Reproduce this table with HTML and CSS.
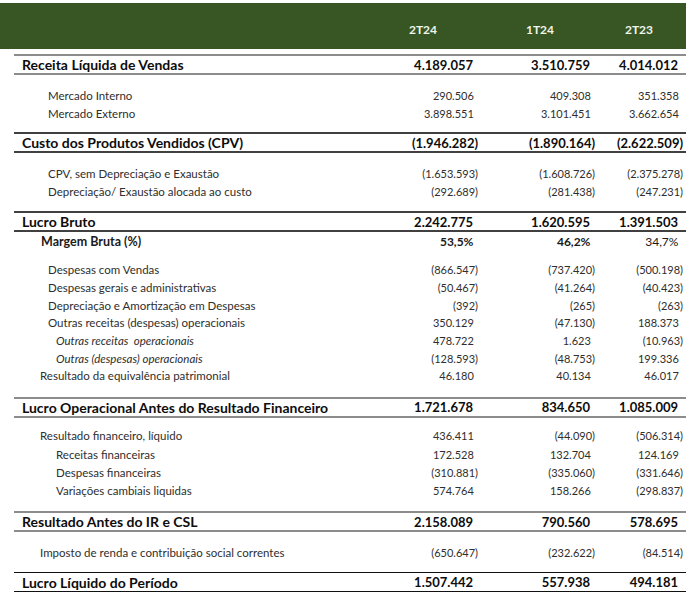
FILE: index.html
```html
<!DOCTYPE html>
<html lang="pt">
<head>
<meta charset="utf-8">
<title>DRE</title>
<link rel="stylesheet" href="styles.css">
</head>
<body>
<div class="sheet">
  <div class="head">
    <span></span>
    <span class="h1">2T24</span>
    <span class="h2">1T24</span>
    <span class="h3">2T23</span>
  </div>
  <div class="body">
    <div class="row total light">
      <span class="lbl">Receita Líquida de Vendas</span>
      <span class="v pos">4.189.057</span><span class="v pos">3.510.759</span><span class="v pos">4.014.012</span>
    </div>
    <div class="grp g-a">
      <div class="row"><span class="lbl i34">Mercado Interno</span><span class="v pos">290.506</span><span class="v pos">409.308</span><span class="v pos">351.358</span></div>
      <div class="row"><span class="lbl i34">Mercado Externo</span><span class="v pos">3.898.551</span><span class="v pos">3.101.451</span><span class="v pos">3.662.654</span></div>
    </div>
    <div class="row total dark">
      <span class="lbl">Custo dos Produtos Vendidos (CPV)</span>
      <span class="v">(1.946.282)</span><span class="v">(1.890.164)</span><span class="v">(2.622.509)</span>
    </div>
    <div class="grp g-b">
      <div class="row"><span class="lbl i34">CPV, sem Depreciação e Exaustão</span><span class="v">(1.653.593)</span><span class="v">(1.608.726)</span><span class="v">(2.375.278)</span></div>
      <div class="row"><span class="lbl i34">Depreciação/ Exaustão alocada ao custo</span><span class="v">(292.689)</span><span class="v">(281.438)</span><span class="v">(247.231)</span></div>
    </div>
    <div class="row total dark">
      <span class="lbl">Lucro Bruto</span>
      <span class="v pos">2.242.775</span><span class="v pos">1.620.595</span><span class="v pos">1.391.503</span>
    </div>
    <div class="row margin">
      <span class="lbl i27">Margem Bruta (%)</span>
      <span class="v pos">53,5%</span><span class="v pos">46,2%</span><span class="v pos reg">34,7%</span>
    </div>
    <div class="grp g-c">
      <div class="row tight"><span class="lbl i34">Despesas com Vendas</span><span class="v">(866.547)</span><span class="v">(737.420)</span><span class="v">(500.198)</span></div>
      <div class="row tight"><span class="lbl i34">Despesas gerais e administrativas</span><span class="v">(50.467)</span><span class="v">(41.264)</span><span class="v">(40.423)</span></div>
      <div class="row tight"><span class="lbl i34">Depreciação e Amortização em Despesas</span><span class="v">(392)</span><span class="v">(265)</span><span class="v">(263)</span></div>
      <div class="row tight"><span class="lbl i34">Outras receitas (despesas) operacionais</span><span class="v pos">350.129</span><span class="v">(47.130)</span><span class="v pos">188.373</span></div>
      <div class="row tight"><span class="lbl i42 it">Outras receitas&nbsp; operacionais</span><span class="v pos">478.722</span><span class="v pos">1.623</span><span class="v">(10.963)</span></div>
      <div class="row tight"><span class="lbl i42 it">Outras (despesas) operacionais</span><span class="v">(128.593)</span><span class="v">(48.753)</span><span class="v pos">199.336</span></div>
      <div class="row tight"><span class="lbl i26">Resultado da equivalência patrimonial</span><span class="v pos">46.180</span><span class="v pos">40.134</span><span class="v pos">46.017</span></div>
    </div>
    <div class="row total light">
      <span class="lbl">Lucro Operacional Antes do Resultado Financeiro</span>
      <span class="v pos">1.721.678</span><span class="v pos">834.650</span><span class="v pos">1.085.009</span>
    </div>
    <div class="grp g-d">
      <div class="row loose"><span class="lbl i26">Resultado financeiro, líquido</span><span class="v pos">436.411</span><span class="v">(44.090)</span><span class="v">(506.314)</span></div>
      <div class="row loose"><span class="lbl i42">Receitas financeiras</span><span class="v pos">172.528</span><span class="v pos">132.704</span><span class="v pos">124.169</span></div>
      <div class="row loose"><span class="lbl i42">Despesas financeiras</span><span class="v">(310.881)</span><span class="v">(335.060)</span><span class="v">(331.646)</span></div>
      <div class="row loose"><span class="lbl i42">Variações cambiais liquidas</span><span class="v pos">574.764</span><span class="v pos">158.266</span><span class="v">(298.837)</span></div>
    </div>
    <div class="row total light">
      <span class="lbl">Resultado Antes do IR e CSL</span>
      <span class="v pos">2.158.089</span><span class="v pos">790.560</span><span class="v pos">578.695</span>
    </div>
    <div class="grp g-e">
      <div class="row"><span class="lbl i26">Imposto de renda e contribuição social correntes</span><span class="v">(650.647)</span><span class="v">(232.622)</span><span class="v">(84.514)</span></div>
    </div>
    <div class="row total black">
      <span class="lbl">Lucro Líquido do Período</span>
      <span class="v pos">1.507.442</span><span class="v pos">557.938</span><span class="v pos">494.181</span>
    </div>
  </div>
</div>
</body>
</html>
```

FILE: styles.css
```css
* { box-sizing: content-box; }
body {
  margin: 0;
  background: #ffffff;
  font-family: Lato, "Liberation Sans", Arial, sans-serif;
}
.sheet {
  width: 686px;
  padding-top: 3px;
}
.head {
  height: 46px;
  background: #375623;
  display: grid;
  grid-template-columns: 368px 110px 117px 91px;
  align-items: center;
  color: #f0f4ea;
  font-weight: 700;
  font-size: 12px;
}
.head span {
  text-align: center;
  padding-top: 6px;
}
.head .h2 { padding-left: 7px; }
.head .h3 { padding-right: 3px; }
.body {
  margin-left: 14px;
  margin-top: 5px;
}
.row {
  display: grid;
  grid-template-columns: 354px 110px 117px 88px;
  padding-right: 3px;
  align-items: center;
  height: 18px;
  font-size: 11px;
  color: #2e2e2e;
  white-space: nowrap;
}
.row .lbl { font-size: 11.5px; }
.row .v { text-align: right; }
.row .pos { padding-right: 0.38em; }
.row.tight { height: 17.7px; }
.row.loose { height: 18.3px; }
.total {
  height: 17px;
  font-weight: 700;
  font-size: 13px;
  color: #0d0d0d;
  border-top: 2px solid #8c8c8c;
  border-bottom: 2px solid #8c8c8c;
}
.total .lbl { padding-left: 8px; font-size: 14px; }
.total.dark { border-color: #404040; }
.total.black { border-top: 1.5px solid #111; border-bottom: 1.5px solid #111; height: 18px; }
.margin {
  font-weight: 700;
  font-size: 12px;
  color: #1a1a1a;
}
.margin .lbl { font-size: 12.5px; }
.margin .reg { font-weight: 400; }
.i26 { padding-left: 26px; }
.i27 { padding-left: 27px; }
.i34 { padding-left: 34px; }
.i42 { padding-left: 42px; }
.it { font-style: italic; }
.g-a { padding: 11px 0 10px; }
.g-b { padding: 11px 0 11px; }
.g-c { padding: 11px 0 12px; }
.g-d { padding: 9px 0 11px; }
.g-e { padding: 11px 0 11px; }
```
